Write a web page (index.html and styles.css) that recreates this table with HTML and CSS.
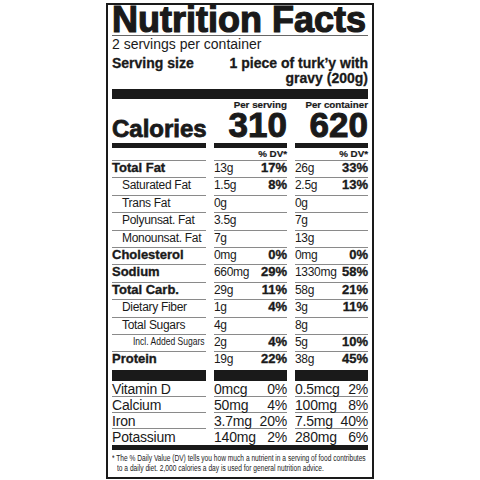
FILE: index.html
```html
<!DOCTYPE html>
<html lang="en">
<head>
  <meta charset="UTF-8" />
  <title>Nutrition Facts</title>
  <link rel="stylesheet" href="styles.css">
</head>
<body>

  <div class="label">
    <h1 class="title">Nutrition Facts</h1>
    <p class="servings">2 servings per container</p>
    <div class="serving-size">
      <span>Serving size</span>
      <span class="size-value">1 piece of turk’y with<br>gravy (200g)</span>
    </div>
    <div class="bar"></div>

    <!-- Calories block -->
    <div class="row head">
      <div class="cell"></div>
      <div class="cell">Per serving</div>
      <div class="cell">Per container</div>
    </div>
    <div class="row calories">
      <div class="cell cal-name">Calories</div>
      <div class="cell cal-num">310</div>
      <div class="cell cal-num">620</div>
    </div>
    <div class="row dv">
      <div class="cell"></div>
      <div class="cell">% DV*</div>
      <div class="cell">% DV*</div>
    </div>

    <!-- Nutrients -->
    <div class="row item">
      <div class="cell name bold">Total Fat</div>
      <div class="cell val"><span>13g</span><b>17%</b></div>
      <div class="cell val"><span>26g</span><b>33%</b></div>
    </div>
    <div class="row item">
      <div class="cell name sub">Saturated Fat</div>
      <div class="cell val"><span>1.5g</span><b>8%</b></div>
      <div class="cell val"><span>2.5g</span><b>13%</b></div>
    </div>
    <div class="row item">
      <div class="cell name sub">Trans Fat</div>
      <div class="cell val"><span>0g</span></div>
      <div class="cell val"><span>0g</span></div>
    </div>
    <div class="row item">
      <div class="cell name sub">Polyunsat. Fat</div>
      <div class="cell val"><span>3.5g</span></div>
      <div class="cell val"><span>7g</span></div>
    </div>
    <div class="row item">
      <div class="cell name sub">Monounsat. Fat</div>
      <div class="cell val"><span>7g</span></div>
      <div class="cell val"><span>13g</span></div>
    </div>
    <div class="row item">
      <div class="cell name bold">Cholesterol</div>
      <div class="cell val"><span>0mg</span><b>0%</b></div>
      <div class="cell val"><span>0mg</span><b>0%</b></div>
    </div>
    <div class="row item">
      <div class="cell name bold">Sodium</div>
      <div class="cell val"><span>660mg</span><b>29%</b></div>
      <div class="cell val"><span>1330mg</span><b>58%</b></div>
    </div>
    <div class="row item">
      <div class="cell name bold">Total Carb.</div>
      <div class="cell val"><span>29g</span><b>11%</b></div>
      <div class="cell val"><span>58g</span><b>21%</b></div>
    </div>
    <div class="row item">
      <div class="cell name sub">Dietary Fiber</div>
      <div class="cell val"><span>1g</span><b>4%</b></div>
      <div class="cell val"><span>3g</span><b>11%</b></div>
    </div>
    <div class="row item">
      <div class="cell name sub">Total Sugars</div>
      <div class="cell val"><span>4g</span></div>
      <div class="cell val"><span>8g</span></div>
    </div>
    <div class="row item">
      <div class="cell name sub2"><span class="narrow">Incl. Added Sugars</span></div>
      <div class="cell val"><span>2g</span><b>4%</b></div>
      <div class="cell val"><span>5g</span><b>10%</b></div>
    </div>
    <div class="row item protein">
      <div class="cell name bold">Protein</div>
      <div class="cell val"><span>19g</span><b>22%</b></div>
      <div class="cell val"><span>38g</span><b>45%</b></div>
    </div>

    <!-- Vitamins and minerals -->
    <div class="row mineral">
      <div class="cell name">Vitamin D</div>
      <div class="cell val"><span>0mcg</span><span>0%</span></div>
      <div class="cell val"><span>0.5mcg</span><span>2%</span></div>
    </div>
    <div class="row mineral">
      <div class="cell name">Calcium</div>
      <div class="cell val"><span>50mg</span><span>4%</span></div>
      <div class="cell val"><span>100mg</span><span>8%</span></div>
    </div>
    <div class="row mineral">
      <div class="cell name">Iron</div>
      <div class="cell val"><span>3.7mg</span><span>20%</span></div>
      <div class="cell val"><span>7.5mg</span><span>40%</span></div>
    </div>
    <div class="row mineral last">
      <div class="cell name">Potassium</div>
      <div class="cell val"><span>140mg</span><span>2%</span></div>
      <div class="cell val"><span>280mg</span><span>6%</span></div>
    </div>
    <div class="bar-mid"></div>

    <div class="footnote">
      <span class="note-line">* The % Daily Value (DV) tells you how much a nutrient in a serving of food contributes</span>
      <span class="note-line indent">to a daily diet. 2,000 calories a day is used for general nutrition advice.</span>
    </div>
  </div>

</body>
</html>
```

FILE: styles.css
```css
* {
  box-sizing: border-box;
  margin: 0;
  padding: 0;
}

body {
  font-family: 'Liberation Sans', Arial, sans-serif;
  color: #1a1a1a;
  background: #fff;
  display: flex;
  justify-content: center;
  padding-top: 3px;
}

.label {
  width: 268px;
  height: 476px;
  border: 2px solid #1a1a1a;
  padding: 0 4px;
}

.title {
  font-size: 36px;
  font-weight: bold;
  line-height: 30px;
  white-space: nowrap;
  -webkit-text-stroke: 1.2px #1a1a1a;
  border-bottom: 1px solid #666;
}

.servings {
  font-size: 14px;
  line-height: 16px;
}

.serving-size {
  display: flex;
  justify-content: space-between;
  align-items: flex-start;
  margin-top: 4px;
  font-size: 14px;
  font-weight: bold;
  line-height: 15px;
  -webkit-text-stroke: 0.3px #1a1a1a;
}

.size-value {
  text-align: right;
}

.bar {
  height: 10px;
  margin-top: 3px;
  background: #1a1a1a;
}

/* table rows */
.row {
  display: grid;
  grid-template-columns: 94px 73px 73px;
  column-gap: 8px;
}

.head .cell,
.dv .cell {
  font-size: 9.8px;
  font-weight: bold;
  line-height: 10px;
  text-align: right;
  -webkit-text-stroke: 0.2px #1a1a1a;
}

.head .cell {
  padding-top: 1px;
  padding-bottom: 1px;
}

.calories .cell {
  padding-bottom: 4px;
  border-bottom: 5px solid #1a1a1a;
  font-weight: bold;
}

.cal-name {
  align-self: end;
  font-size: 24px;
  line-height: 20px;
  -webkit-text-stroke: 0.8px #1a1a1a;
}

.cal-num {
  font-size: 35px;
  line-height: 28px;
  text-align: right;
  -webkit-text-stroke: 1px #1a1a1a;
}

.dv .cell {
  padding: 1px 0;
  border-bottom: 1px solid #8a8a8a;
}

.item .cell {
  font-size: 12px;
  line-height: 14px;
  padding-bottom: 2.4px;
  border-bottom: 1px solid #8a8a8a;
  letter-spacing: -0.3px;
  white-space: nowrap;
}

.item .name {
  font-size: 13px;
  letter-spacing: -0.2px;
}

.item .bold,
.item b {
  font-size: 13px;
  font-weight: bold;
  letter-spacing: 0;
  -webkit-text-stroke: 0.35px #1a1a1a;
}

.item .sub {
  font-size: 12px;
  padding-left: 10px;
  letter-spacing: -0.3px;
}

.item .sub2 {
  font-size: 10.4px;
  padding-left: 21px;
  letter-spacing: 0;
}

.narrow {
  display: inline-block;
  transform: scaleX(0.82);
  transform-origin: left center;
}

.val {
  display: flex;
  justify-content: space-between;
  align-items: baseline;
}

.item.protein .cell {
  padding-bottom: 3.4px;
  border-bottom: 11px solid #1a1a1a;
}

.mineral .cell {
  font-size: 14px;
  line-height: 13px;
  padding-top: 2px;
  border-bottom: 1px solid #8a8a8a;
  letter-spacing: -0.2px;
  white-space: nowrap;
}

.mineral.last .cell {
  padding-bottom: 1px;
  border-bottom: none;
}

.bar-mid {
  height: 5px;
  background: #1a1a1a;
}

.footnote {
  font-size: 8.5px;
  line-height: 10px;
  padding-top: 3px;
  white-space: nowrap;
}

.note-line {
  display: block;
  transform: scaleX(0.78);
  transform-origin: left center;
}

.note-line.indent {
  margin-left: 5px;
}
```
